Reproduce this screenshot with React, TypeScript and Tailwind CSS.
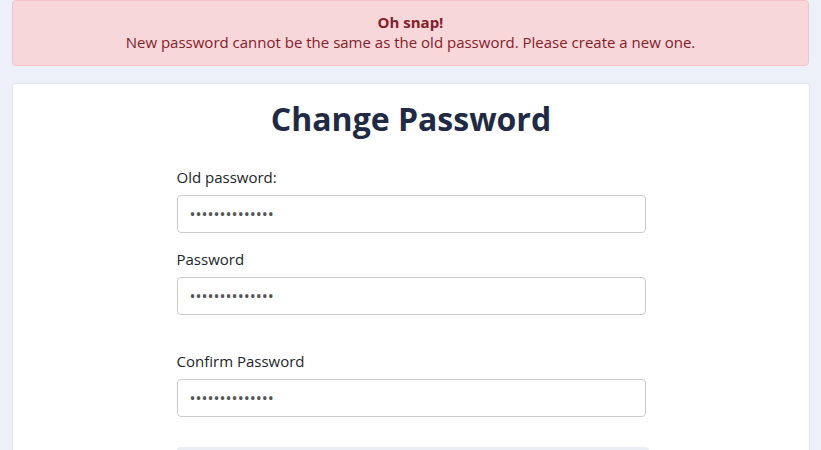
export default function App() {
  const font = { fontFamily: '"Open Sans", "Noto Sans", sans-serif' };
  return (
    <div className="min-h-[450px] bg-[#edf0f8] px-3 text-[#212529]" style={font}>
      <div className="rounded border border-[#f5c2c7] bg-[#f8d7da] px-4 pt-[11px] pb-[13px] text-center text-[15px] leading-5 text-[#842029]">
        <div className="font-bold">Oh snap!</div>
        <div>New password cannot be the same as the old password. Please create a new one.</div>
      </div>

      <div className="mt-[17px] w-[798px] rounded-t border border-b-0 border-[#e3e6ef] bg-white pt-[15px]">
        <h1 className="text-center text-[32px] font-bold leading-10 text-[#1f2a44]">
          Change Password
        </h1>

        <form className="mx-auto mt-[28px] w-[469px]" onSubmit={(e) => e.preventDefault()}>
          <label className="block text-[15px] leading-5">Old password:</label>
          <input
            type="password"
            defaultValue="12345678901234"
            className="mt-2 block h-[38px] w-full rounded border border-[#cccccc] px-3 text-[16px] text-[#555] outline-none"
          />

          <label className="mt-4 block text-[15px] leading-5">Password</label>
          <input
            type="password"
            defaultValue="12345678901234"
            className="mt-2 block h-[38px] w-full rounded border border-[#cccccc] px-3 text-[16px] text-[#555] outline-none"
          />

          <label className="mt-9 block text-[15px] leading-5">Confirm Password</label>
          <input
            type="password"
            defaultValue="12345678901234"
            className="mt-2 block h-[38px] w-full rounded border border-[#cccccc] px-3 text-[16px] text-[#555] outline-none"
          />

          <button
            type="submit"
            className="mt-[30px] block h-[60px] w-[472px] rounded bg-[#eceef5] text-[15px]"
          >
            Change Password
          </button>
        </form>
      </div>
    </div>
  );
}
